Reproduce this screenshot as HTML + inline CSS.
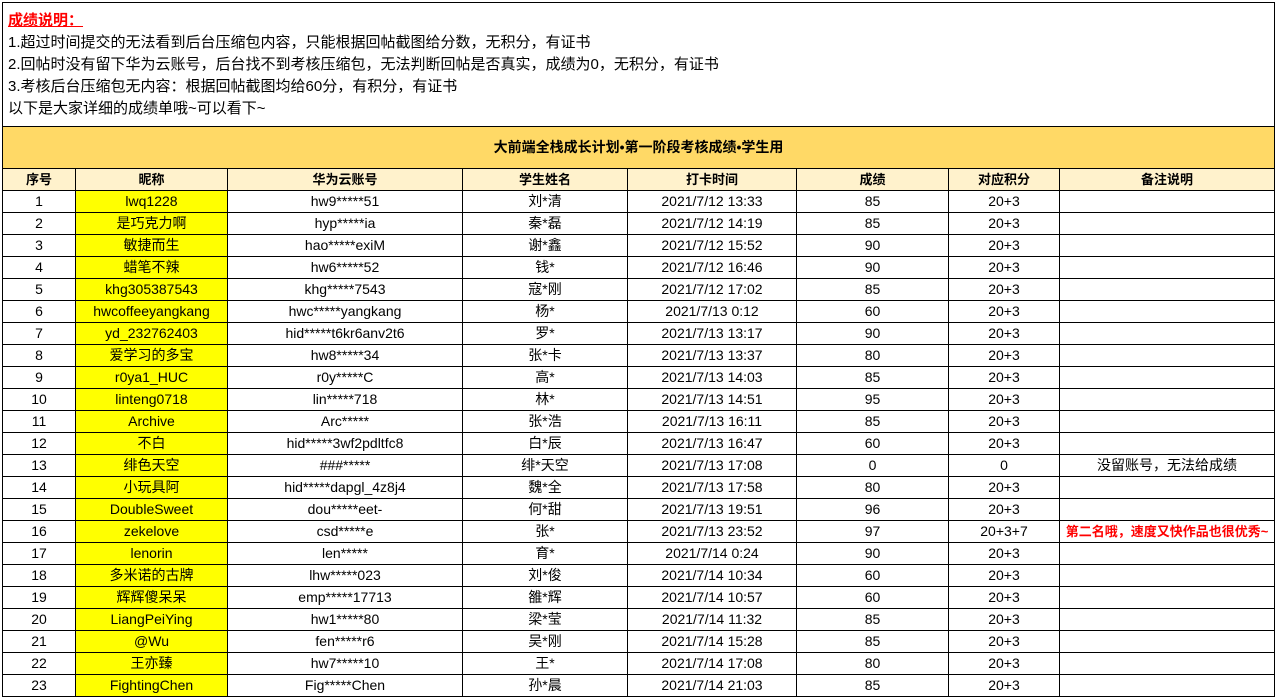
<!DOCTYPE html><html><head><meta charset="utf-8"><style>
body{margin:0;width:1278px;height:695px;overflow:hidden;background:#fff;font-family:"Liberation Sans","Noto Sans CJK SC",sans-serif;font-size:14px;color:#000}
.top{position:absolute;left:2px;top:2px;width:1271px;height:124px;border:1px solid #000;border-bottom:none}
.top div{position:absolute;left:5px;white-space:nowrap;font-size:15px;line-height:22px}
.h{color:#f00;font-weight:bold;text-decoration:underline}
table{position:absolute;left:2px;top:126px;border-collapse:collapse;table-layout:fixed}
td{border:1px solid #000;height:21px;padding:0;text-align:center;white-space:nowrap;overflow:hidden;line-height:21px}
.t td{height:41px;background:#FFD966;font-weight:bold;font-size:14px}
.hd td{background:#FFF2CC;font-weight:bold;font-size:13px}
.y{background:#ff0}
.r{color:#f00;font-weight:bold;font-size:13px}
</style></head><body>
<div class="top">
<div class="h" style="top:7px">成绩说明：</div>
<div style="top:29px">1.超过时间提交的无法看到后台压缩包内容，只能根据回帖截图给分数，无积分，有证书</div>
<div style="top:51px">2.回帖时没有留下华为云账号，后台找不到考核压缩包，无法判断回帖是否真实，成绩为0，无积分，有证书</div>
<div style="top:73px">3.考核后台压缩包无内容：根据回帖截图均给60分，有积分，有证书</div>
<div style="top:95px">以下是大家详细的成绩单哦~可以看下~</div>
</div>
<table>
<colgroup><col style="width:73px"><col style="width:152px"><col style="width:235px"><col style="width:165px"><col style="width:169px"><col style="width:152px"><col style="width:111px"><col style="width:215px"></colgroup>
<tr class="t"><td colspan="8">大前端全栈成长计划•第一阶段考核成绩•学生用</td></tr>
<tr class="hd"><td>序号</td><td>昵称</td><td>华为云账号</td><td>学生姓名</td><td>打卡时间</td><td>成绩</td><td>对应积分</td><td>备注说明</td></tr>
<tr><td>1</td><td class="y">lwq1228</td><td>hw9*****51</td><td>刘*清</td><td>2021/7/12 13:33</td><td>85</td><td>20+3</td><td></td></tr>
<tr><td>2</td><td class="y">是巧克力啊</td><td>hyp*****ia</td><td>秦*磊</td><td>2021/7/12 14:19</td><td>85</td><td>20+3</td><td></td></tr>
<tr><td>3</td><td class="y">敏捷而生</td><td>hao*****exiM</td><td>谢*鑫</td><td>2021/7/12 15:52</td><td>90</td><td>20+3</td><td></td></tr>
<tr><td>4</td><td class="y">蜡笔不辣</td><td>hw6*****52</td><td>钱*</td><td>2021/7/12 16:46</td><td>90</td><td>20+3</td><td></td></tr>
<tr><td>5</td><td class="y">khg305387543</td><td>khg*****7543</td><td>寇*刚</td><td>2021/7/12 17:02</td><td>85</td><td>20+3</td><td></td></tr>
<tr><td>6</td><td class="y">hwcoffeeyangkang</td><td>hwc*****yangkang</td><td>杨*</td><td>2021/7/13 0:12</td><td>60</td><td>20+3</td><td></td></tr>
<tr><td>7</td><td class="y">yd_232762403</td><td>hid*****t6kr6anv2t6</td><td>罗*</td><td>2021/7/13 13:17</td><td>90</td><td>20+3</td><td></td></tr>
<tr><td>8</td><td class="y">爱学习的多宝</td><td>hw8*****34</td><td>张*卡</td><td>2021/7/13 13:37</td><td>80</td><td>20+3</td><td></td></tr>
<tr><td>9</td><td class="y">r0ya1_HUC</td><td>r0y*****C</td><td>高*</td><td>2021/7/13 14:03</td><td>85</td><td>20+3</td><td></td></tr>
<tr><td>10</td><td class="y">linteng0718</td><td>lin*****718</td><td>林*</td><td>2021/7/13 14:51</td><td>95</td><td>20+3</td><td></td></tr>
<tr><td>11</td><td class="y">Archive</td><td>Arc*****</td><td>张*浩</td><td>2021/7/13 16:11</td><td>85</td><td>20+3</td><td></td></tr>
<tr><td>12</td><td class="y">不白</td><td>hid*****3wf2pdltfc8</td><td>白*辰</td><td>2021/7/13 16:47</td><td>60</td><td>20+3</td><td></td></tr>
<tr><td>13</td><td class="y">绯色天空</td><td>###*****</td><td>绯*天空</td><td>2021/7/13 17:08</td><td>0</td><td>0</td><td>没留账号，无法给成绩</td></tr>
<tr><td>14</td><td class="y">小玩具阿</td><td>hid*****dapgl_4z8j4</td><td>魏*全</td><td>2021/7/13 17:58</td><td>80</td><td>20+3</td><td></td></tr>
<tr><td>15</td><td class="y">DoubleSweet</td><td>dou*****eet-</td><td>何*甜</td><td>2021/7/13 19:51</td><td>96</td><td>20+3</td><td></td></tr>
<tr><td>16</td><td class="y">zekelove</td><td>csd*****e</td><td>张*</td><td>2021/7/13 23:52</td><td>97</td><td>20+3+7</td><td class="r">第二名哦，速度又快作品也很优秀~</td></tr>
<tr><td>17</td><td class="y">lenorin</td><td>len*****</td><td>育*</td><td>2021/7/14 0:24</td><td>90</td><td>20+3</td><td></td></tr>
<tr><td>18</td><td class="y">多米诺的古牌</td><td>lhw*****023</td><td>刘*俊</td><td>2021/7/14 10:34</td><td>60</td><td>20+3</td><td></td></tr>
<tr><td>19</td><td class="y">辉辉傻呆呆</td><td>emp*****17713</td><td>雒*辉</td><td>2021/7/14 10:57</td><td>60</td><td>20+3</td><td></td></tr>
<tr><td>20</td><td class="y">LiangPeiYing</td><td>hw1*****80</td><td>梁*莹</td><td>2021/7/14 11:32</td><td>85</td><td>20+3</td><td></td></tr>
<tr><td>21</td><td class="y">@Wu</td><td>fen*****r6</td><td>吴*刚</td><td>2021/7/14 15:28</td><td>85</td><td>20+3</td><td></td></tr>
<tr><td>22</td><td class="y">王亦臻</td><td>hw7*****10</td><td>王*</td><td>2021/7/14 17:08</td><td>80</td><td>20+3</td><td></td></tr>
<tr><td>23</td><td class="y">FightingChen</td><td>Fig*****Chen</td><td>孙*晨</td><td>2021/7/14 21:03</td><td>85</td><td>20+3</td><td></td></tr>
</table>
</body></html>
